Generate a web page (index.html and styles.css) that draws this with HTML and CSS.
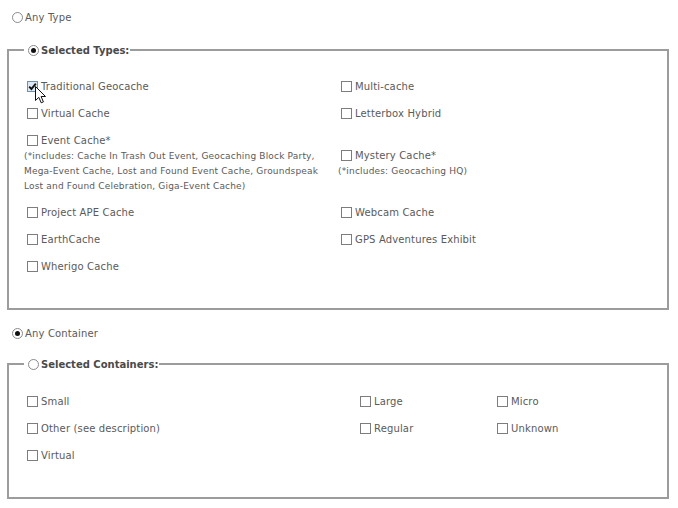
FILE: index.html
```html
<!DOCTYPE html>
<html>
<head>
<meta charset="utf-8">
<link rel="stylesheet" href="styles.css">
</head>
<body>
<div class="page">
  <div class="opt top"><span class="radio"></span>Any Type</div>

  <fieldset class="box types">
    <legend><span class="radio on"></span>Selected Types:</legend>
    <table class="grid">
      <tr>
        <td class="c1"><div class="item"><span class="check on"><svg viewBox="0 0 11 11" width="11" height="11"><path d="M2.2 5.6 L4.4 8 L8.8 2.6" fill="none" stroke="#111" stroke-width="1.9"/></svg></span>Traditional Geocache<svg class="cursor" viewBox="0 0 12 18" width="12" height="18"><path d="M0.5 0.5 L0.5 14.5 L3.8 11.3 L6.2 16.8 L8.4 15.9 L6.1 10.5 L10.5 10.5 Z" fill="#fff" stroke="#111" stroke-width="1" stroke-linejoin="round"/></svg></div></td>
        <td><div class="item"><span class="check"></span>Multi-cache</div></td>
      </tr>
      <tr>
        <td class="c1"><div class="item"><span class="check"></span>Virtual Cache</div></td>
        <td><div class="item"><span class="check"></span>Letterbox Hybrid</div></td>
      </tr>
      <tr>
        <td class="c1"><div class="item"><span class="check"></span>Event Cache*</div>
          <div class="note">(*includes: Cache In Trash Out Event, Geocaching Block Party,<br>Mega-Event Cache, Lost and Found Event Cache, Groundspeak<br>Lost and Found Celebration, Giga-Event Cache)</div></td>
        <td><div class="item"><span class="check"></span>Mystery Cache*</div>
          <div class="note">(*includes: Geocaching HQ)</div></td>
      </tr>
      <tr>
        <td class="c1"><div class="item"><span class="check"></span>Project APE Cache</div></td>
        <td><div class="item"><span class="check"></span>Webcam Cache</div></td>
      </tr>
      <tr>
        <td class="c1"><div class="item"><span class="check"></span>EarthCache</div></td>
        <td><div class="item"><span class="check"></span>GPS Adventures Exhibit</div></td>
      </tr>
      <tr>
        <td class="c1"><div class="item"><span class="check"></span>Wherigo Cache</div></td>
        <td></td>
      </tr>
    </table>
  </fieldset>

  <div class="opt mid"><span class="radio on"></span>Any Container</div>

  <fieldset class="box containers">
    <legend><span class="radio"></span>Selected Containers:</legend>
    <table class="grid">
      <tr>
        <td class="k1"><div class="item"><span class="check"></span>Small</div></td>
        <td class="k2"><div class="item"><span class="check"></span>Large</div></td>
        <td><div class="item"><span class="check"></span>Micro</div></td>
      </tr>
      <tr>
        <td class="k1"><div class="item"><span class="check"></span>Other (see description)</div></td>
        <td class="k2"><div class="item"><span class="check"></span>Regular</div></td>
        <td><div class="item"><span class="check"></span>Unknown</div></td>
      </tr>
      <tr>
        <td class="k1"><div class="item"><span class="check"></span>Virtual</div></td>
        <td class="k2"></td>
        <td></td>
      </tr>
    </table>
  </fieldset>
</div>
</body>
</html>
```
FILE: styles.css
```css
html, body {
  margin: 0;
  padding: 0;
  background: #fff;
}
body {
  font-family: "DejaVu Sans", Verdana, sans-serif;
  font-size: 10px;
  color: #5a5a5a;
}
.page {
  padding: 9px 9px 0 7px;
}
.opt {
  display: flex;
  align-items: center;
  height: 17px;
  padding-left: 5px;
  letter-spacing: 0.15px;
}
.mid {
  margin-top: 15px;
}
.radio {
  display: inline-block;
  box-sizing: border-box;
  width: 11px;
  height: 11px;
  border: 1px solid #8a8a8a;
  border-radius: 50%;
  background: #fff;
  margin-right: 2px;
  position: relative;
  flex: none;
}
.radio.on::after {
  content: "";
  position: absolute;
  left: 2px;
  top: 2px;
  width: 5px;
  height: 5px;
  border-radius: 50%;
  background: #111;
}
.box {
  margin: 16px 0 0 0;
  padding: 0 15px;
  border: 2px solid #9c9c9c;
  min-width: 0;
}
.types {
  padding-bottom: 28px;
}
.containers {
  margin-top: 14px;
  padding-bottom: 28px;
}
.containers .grid {
  margin-top: 16px;
}
legend {
  display: flex;
  align-items: center;
  padding: 0 1px 0 4px;
  font-weight: bold;
  color: #4a4a4a;
  height: 16px;
}
.grid {
  border-collapse: collapse;
  margin-top: 15px;
}
.grid td {
  padding: 5px 0;
  vertical-align: middle;
}
.c1 { width: 314px; }
.k1 { width: 333px; }
.k2 { width: 137px; }
.item {
  display: flex;
  align-items: center;
  height: 17px;
  white-space: nowrap;
  position: relative;
  letter-spacing: 0.15px;
}
.check {
  display: inline-block;
  box-sizing: border-box;
  width: 11px;
  height: 11px;
  border: 1px solid #7d7d7d;
  background: #fff;
  margin: 0 3px 0 3px;
  flex: none;
  position: relative;
}
.check.on {
  background: #dce8f4;
  border-color: #6f8fb0;
}
.check svg {
  position: absolute;
  left: -1px;
  top: -1px;
}
.note {
  font-size: 9px;
  line-height: 15px;
  white-space: nowrap;
  letter-spacing: 0.18px;
}
.cursor {
  position: absolute;
  left: 11px;
  top: 8px;
}
```
